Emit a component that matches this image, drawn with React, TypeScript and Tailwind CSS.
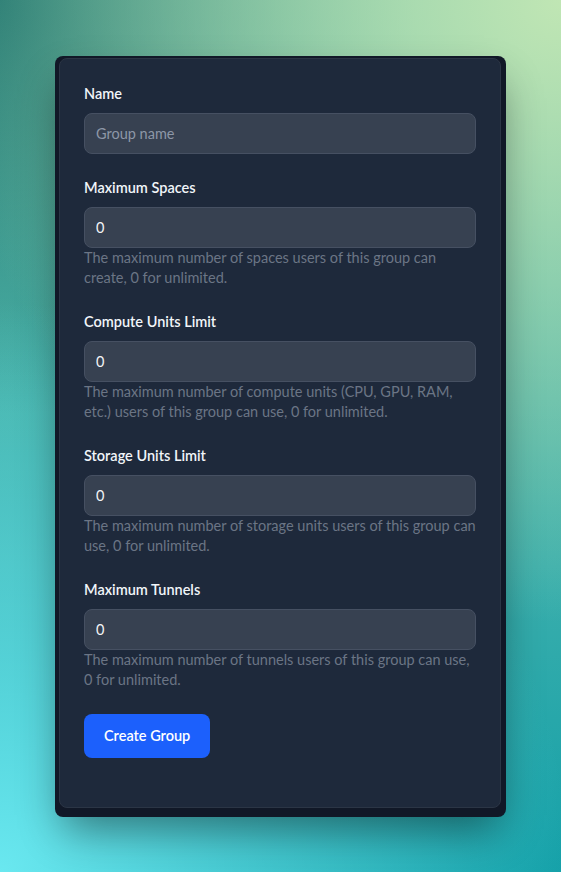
import React from 'react';

interface FieldProps {
  label: string;
  value?: string;
  placeholder?: string;
  help?: string;
}

const Field = ({ label, value, placeholder, help }: FieldProps) => {
  return (
    <div>
      <label className="block text-[14.5px] leading-5 font-semibold text-[#f1f5f9] mb-[9px]">{label}</label>
      <input
        type="text"
        defaultValue={value}
        placeholder={placeholder}
        className="block w-full h-[41px] rounded-lg border border-[#465062] bg-[#374151] px-[11px] text-[14.5px] text-[#f3f4f6] placeholder:text-[#8d97a7] outline-none"
      />
      {help && <p className="text-[14.5px] leading-5 text-[#6b7585]">{help}</p>}
    </div>
  );
};

const fields: FieldProps[] = [
  { label: 'Name', placeholder: 'Group name' },
  {
    label: 'Maximum Spaces',
    value: '0',
    help: 'The maximum number of spaces users of this group can create, 0 for unlimited.',
  },
  {
    label: 'Compute Units Limit',
    value: '0',
    help: 'The maximum number of compute units (CPU, GPU, RAM, etc.) users of this group can use, 0 for unlimited.',
  },
  {
    label: 'Storage Units Limit',
    value: '0',
    help: 'The maximum number of storage units users of this group can use, 0 for unlimited.',
  },
  {
    label: 'Maximum Tunnels',
    value: '0',
    help: 'The maximum number of tunnels users of this group can use, 0 for unlimited.',
  },
];

export default function App() {
  return (
    <div className="min-h-[872px] px-[55px] py-[56px] font-['Lato',sans-serif] bg-[radial-gradient(circle_at_100%_0%,#c0e6b4_0%,transparent_60%),radial-gradient(circle_at_0%_100%,#6ae8f0_0%,transparent_55%),radial-gradient(circle_at_0%_0%,#237872_0%,transparent_40%),linear-gradient(to_bottom,#62b8a2,#3aaeac_65%,#14a0a8)]">
      <div className="rounded-lg bg-[#111827] pt-[2px] pl-1 pr-[5px] pb-[9px] shadow-[0_20px_40px_-8px_rgba(0,0,0,0.45)]">
        <div className="rounded-lg border border-[#2b3545] bg-[#1e293b] px-6 pt-[25px] pb-[49px]">
          <form className="space-y-6" onSubmit={(e) => e.preventDefault()}>
            {fields.map((f) => (
              <Field key={f.label} {...f} />
            ))}
            <button
              type="submit"
              className="h-11 rounded-lg bg-[#1c60fc] px-5 text-[14.5px] font-semibold text-white"
            >
              Create Group
            </button>
          </form>
        </div>
      </div>
    </div>
  );
}
